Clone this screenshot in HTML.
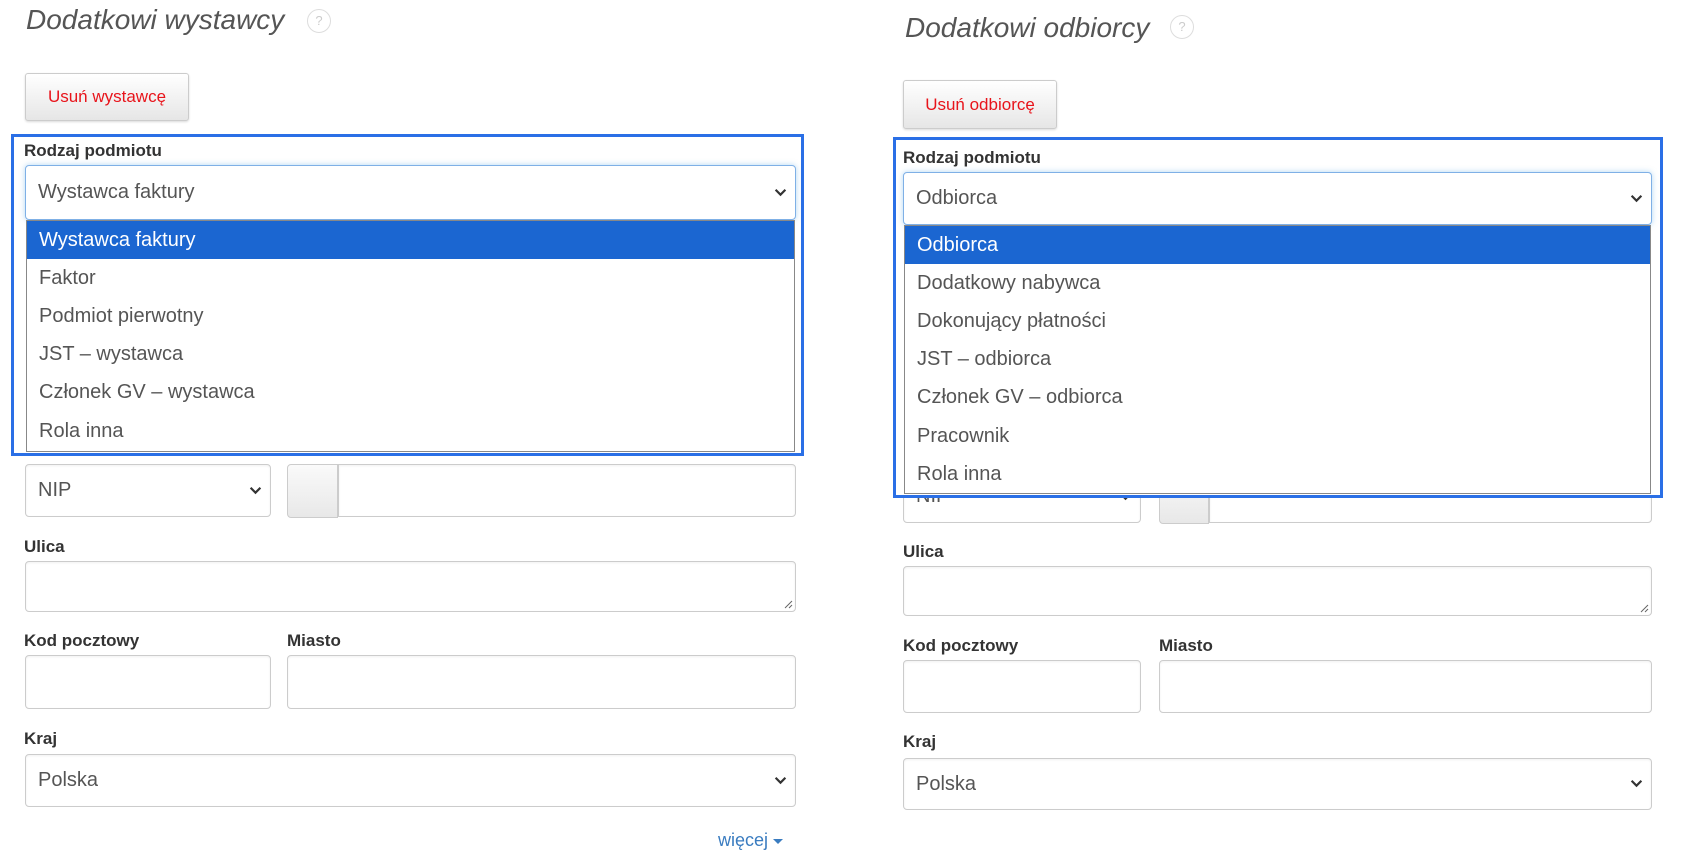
<!DOCTYPE html>
<html><head><meta charset="utf-8"><style>
*{box-sizing:border-box;margin:0;padding:0}
body{width:1684px;height:865px;background:#fff;position:relative;overflow:hidden;font-family:"Liberation Sans",sans-serif;color:#555}
.a{position:absolute}
.title{font-style:italic;font-size:28px;color:#555;white-space:nowrap}
.q{width:24px;height:24px;border:1.5px solid #ddd;border-radius:50%;color:#ccc;font-size:13px;text-align:center;line-height:21px}
.btn{border:1px solid #ccc;border-radius:3px;background:linear-gradient(#fff,#e6e6e6);box-shadow:0 1px 2px rgba(0,0,0,.15);color:#e8141b;font-size:17px;display:flex;align-items:center;justify-content:center}
.lbl{font-weight:bold;font-size:17px;color:#333;white-space:nowrap}
.box{border:1px solid #ccc;border-radius:4px;background:#fff;box-shadow:inset 0 1px 2px rgba(0,0,0,.06)}
.sel{font-size:20px;color:#555;padding-left:12px;display:flex;align-items:center}
.chev{position:absolute;right:8px;top:50%;margin-top:-5px}
.blue{border:3px solid #2a6fe6}
.list{border:1px solid #888;background:#fff}
.it{height:38.2px;font-size:20px;color:#555;padding-left:12px;display:flex;align-items:center;white-space:nowrap}
.it.s{background:#1b66d1;color:#fff}
.gbtn{border:1px solid #ccc;border-radius:4px 0 0 4px;background:linear-gradient(#fafafa,#e8e8e8)}
</style></head><body>
<svg width="0" height="0" style="position:absolute"><defs><symbol id="cv" viewBox="0 0 12 8"><path d="M1.5 1.5 L6 6 L10.5 1.5" fill="none" stroke="#333" stroke-width="2"/></symbol></defs></svg>

<!-- LEFT -->
<div class="a title" style="left:26px;top:4px">Dodatkowi wystawcy</div>
<div class="a q" style="left:307px;top:9px">?</div>
<div class="a btn" style="left:25px;top:73px;width:164px;height:48px">Usuń wystawcę</div>

<div class="a box sel" style="left:25px;top:464px;width:246px;height:53px">NIP<svg class="chev" width="13" height="9"><use href="#cv"/></svg></div>
<div class="a gbtn" style="left:287px;top:464px;width:51px;height:54px"></div>
<div class="a box" style="left:338px;top:464px;width:458px;height:53px;border-radius:0 4px 4px 0"></div>
<div class="a lbl" style="left:24px;top:537px">Ulica</div>
<div class="a box" style="left:25px;top:561px;width:771px;height:51px"><svg class="a" style="right:2px;bottom:2px" width="10" height="10"><path d="M9 2 L2 9 M9 6 L6 9" stroke="#666" stroke-width="1"/></svg></div>
<div class="a lbl" style="left:24px;top:631px">Kod pocztowy</div>
<div class="a lbl" style="left:287px;top:631px">Miasto</div>
<div class="a box" style="left:25px;top:655px;width:246px;height:54px"></div>
<div class="a box" style="left:287px;top:655px;width:509px;height:54px"></div>
<div class="a lbl" style="left:24px;top:729px">Kraj</div>
<div class="a box sel" style="left:25px;top:754px;width:771px;height:53px">Polska<svg class="chev" width="13" height="9"><use href="#cv"/></svg></div>
<div class="a" style="left:718px;top:830px;font-size:18px;color:#3a7cc0">więcej <span style="display:inline-block;width:0;height:0;border-left:5px solid transparent;border-right:5px solid transparent;border-top:5px solid #3a7cc0;vertical-align:middle"></span></div>

<div class="a blue" style="left:11px;top:134px;width:793px;height:322px;background:#fff"></div>
<div class="a lbl" style="left:24px;top:141px">Rodzaj podmiotu</div>
<div class="a box sel" style="left:25px;top:165px;width:771px;height:55px;border-color:#7fb0e6;box-shadow:0 0 6px rgba(102,175,233,.5)">Wystawca faktury<svg class="chev" width="13" height="9"><use href="#cv"/></svg></div>
<div class="a list" style="left:26px;top:220px;width:769px;height:232px">
<div class="it s">Wystawca faktury</div><div class="it">Faktor</div><div class="it">Podmiot pierwotny</div><div class="it">JST – wystawca</div><div class="it">Członek GV – wystawca</div><div class="it">Rola inna</div>
</div>

<!-- RIGHT -->
<div class="a title" style="left:905px;top:12px">Dodatkowi odbiorcy</div>
<div class="a q" style="left:1170px;top:15px">?</div>
<div class="a btn" style="left:903px;top:80px;width:154px;height:49px">Usuń odbiorcę</div>

<div class="a box sel" style="left:903px;top:470px;width:238px;height:53px">NIP<svg class="chev" width="13" height="9"><use href="#cv"/></svg></div>
<div class="a gbtn" style="left:1159px;top:470px;width:50px;height:54px"></div>
<div class="a box" style="left:1209px;top:470px;width:443px;height:53px;border-radius:0 4px 4px 0"></div>
<div class="a lbl" style="left:903px;top:542px">Ulica</div>
<div class="a box" style="left:903px;top:566px;width:749px;height:50px"><svg class="a" style="right:2px;bottom:2px" width="10" height="10"><path d="M9 2 L2 9 M9 6 L6 9" stroke="#666" stroke-width="1"/></svg></div>
<div class="a lbl" style="left:903px;top:636px">Kod pocztowy</div>
<div class="a lbl" style="left:1159px;top:636px">Miasto</div>
<div class="a box" style="left:903px;top:660px;width:238px;height:53px"></div>
<div class="a box" style="left:1159px;top:660px;width:493px;height:53px"></div>
<div class="a lbl" style="left:903px;top:732px">Kraj</div>
<div class="a box sel" style="left:903px;top:758px;width:749px;height:52px">Polska<svg class="chev" width="13" height="9"><use href="#cv"/></svg></div>

<div class="a blue" style="left:893px;top:137px;width:770px;height:361px;background:#fff"></div>
<div class="a lbl" style="left:903px;top:148px">Rodzaj podmiotu</div>
<div class="a box sel" style="left:903px;top:172px;width:749px;height:53px;border-color:#7fb0e6;box-shadow:0 0 6px rgba(102,175,233,.5)">Odbiorca<svg class="chev" width="13" height="9"><use href="#cv"/></svg></div>
<div class="a list" style="left:904px;top:225px;width:747px;height:269px">
<div class="it s">Odbiorca</div><div class="it">Dodatkowy nabywca</div><div class="it">Dokonujący płatności</div><div class="it">JST – odbiorca</div><div class="it">Członek GV – odbiorca</div><div class="it">Pracownik</div><div class="it">Rola inna</div>
</div>
</body></html>
